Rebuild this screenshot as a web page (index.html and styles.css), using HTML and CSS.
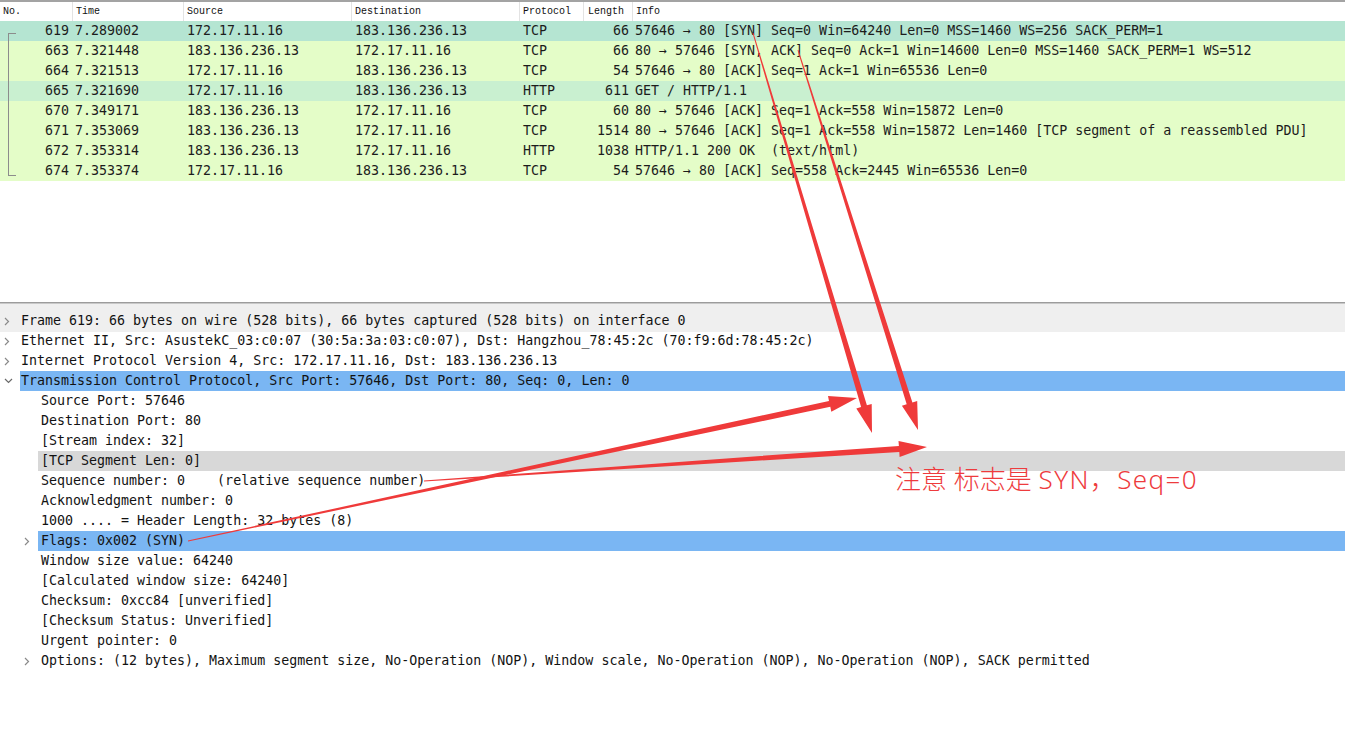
FILE: index.html
```html
<!DOCTYPE html>
<html>
<head>
<meta charset="utf-8">
<link rel="stylesheet" href="styles.css">
</head>
<body>
<div class="app">
  <div class="plist">
    <div class="phead">
      <div class="hc">No.</div>
      <div class="hc">Time</div>
      <div class="hc">Source</div>
      <div class="hc">Destination</div>
      <div class="hc">Protocol</div>
      <div class="hc">Length</div>
      <div class="hc">Info</div>
    </div>
    <div class="prow r-first">
      <div class="c no first">619</div><div class="c">7.289002</div><div class="c src">172.17.11.16</div><div class="c dst">183.136.236.13</div><div class="c pr">TCP</div><div class="c len">66</div><div class="c info">57646 → 80 [SYN] Seq=0 Win=64240 Len=0 MSS=1460 WS=256 SACK_PERM=1</div>
    </div>
    <div class="prow r-tcp">
      <div class="c no mid">663</div><div class="c">7.321448</div><div class="c src">183.136.236.13</div><div class="c dst">172.17.11.16</div><div class="c pr">TCP</div><div class="c len">66</div><div class="c info">80 → 57646 [SYN, ACK] Seq=0 Ack=1 Win=14600 Len=0 MSS=1460 SACK_PERM=1 WS=512</div>
    </div>
    <div class="prow r-tcp">
      <div class="c no mid">664</div><div class="c">7.321513</div><div class="c src">172.17.11.16</div><div class="c dst">183.136.236.13</div><div class="c pr">TCP</div><div class="c len">54</div><div class="c info">57646 → 80 [ACK] Seq=1 Ack=1 Win=65536 Len=0</div>
    </div>
    <div class="prow r-http">
      <div class="c no mid">665</div><div class="c">7.321690</div><div class="c src">172.17.11.16</div><div class="c dst">183.136.236.13</div><div class="c pr">HTTP</div><div class="c len">611</div><div class="c info">GET / HTTP/1.1</div>
    </div>
    <div class="prow r-tcp">
      <div class="c no mid">670</div><div class="c">7.349171</div><div class="c src">183.136.236.13</div><div class="c dst">172.17.11.16</div><div class="c pr">TCP</div><div class="c len">60</div><div class="c info">80 → 57646 [ACK] Seq=1 Ack=558 Win=15872 Len=0</div>
    </div>
    <div class="prow r-tcp">
      <div class="c no mid">671</div><div class="c">7.353069</div><div class="c src">183.136.236.13</div><div class="c dst">172.17.11.16</div><div class="c pr">TCP</div><div class="c len">1514</div><div class="c info">80 → 57646 [ACK] Seq=1 Ack=558 Win=15872 Len=1460 [TCP segment of a reassembled PDU]</div>
    </div>
    <div class="prow r-tcp">
      <div class="c no mid">672</div><div class="c">7.353314</div><div class="c src">183.136.236.13</div><div class="c dst">172.17.11.16</div><div class="c pr">HTTP</div><div class="c len">1038</div><div class="c info">HTTP/1.1 200 OK  (text/html)</div>
    </div>
    <div class="prow r-tcp">
      <div class="c no last">674</div><div class="c">7.353374</div><div class="c src">172.17.11.16</div><div class="c dst">183.136.236.13</div><div class="c pr">TCP</div><div class="c len">54</div><div class="c info">57646 → 80 [ACK] Seq=558 Ack=2445 Win=65536 Len=0</div>
    </div>
  </div>

  <div class="details">
    <div class="drow top hover"><span class="exp"><svg width="6" height="9" viewBox="0 0 6 9"><path d="M1 1 L4.5 4.5 L1 8" fill="none" stroke="#8a8a8a" stroke-width="1.2"/></svg></span><span class="lbl">Frame 619: 66 bytes on wire (528 bits), 66 bytes captured (528 bits) on interface 0</span></div>
    <div class="drow top"><span class="exp"><svg width="6" height="9" viewBox="0 0 6 9"><path d="M1 1 L4.5 4.5 L1 8" fill="none" stroke="#8a8a8a" stroke-width="1.2"/></svg></span><span class="lbl">Ethernet II, Src: AsustekC_03:c0:07 (30:5a:3a:03:c0:07), Dst: Hangzhou_78:45:2c (70:f9:6d:78:45:2c)</span></div>
    <div class="drow top"><span class="exp"><svg width="6" height="9" viewBox="0 0 6 9"><path d="M1 1 L4.5 4.5 L1 8" fill="none" stroke="#8a8a8a" stroke-width="1.2"/></svg></span><span class="lbl">Internet Protocol Version 4, Src: 172.17.11.16, Dst: 183.136.236.13</span></div>
    <div class="drow top"><span class="exp"><svg width="9" height="6" viewBox="0 0 9 6"><path d="M1 1 L4.5 4.5 L8 1" fill="none" stroke="#6a6a6a" stroke-width="1.2"/></svg></span><span class="lbl sel">Transmission Control Protocol, Src Port: 57646, Dst Port: 80, Seq: 0, Len: 0</span></div>
    <div class="drow sub"><span class="exp"></span><span class="lbl">Source Port: 57646</span></div>
    <div class="drow sub"><span class="exp"></span><span class="lbl">Destination Port: 80</span></div>
    <div class="drow sub"><span class="exp"></span><span class="lbl">[Stream index: 32]</span></div>
    <div class="drow sub"><span class="exp"></span><span class="lbl grey">[TCP Segment Len: 0]</span></div>
    <div class="drow sub"><span class="exp"></span><span class="lbl">Sequence number: 0    (relative sequence number)</span></div>
    <div class="drow sub"><span class="exp"></span><span class="lbl">Acknowledgment number: 0</span></div>
    <div class="drow sub"><span class="exp"></span><span class="lbl">1000 .... = Header Length: 32 bytes (8)</span></div>
    <div class="drow sub"><span class="exp"><svg width="6" height="9" viewBox="0 0 6 9"><path d="M1 1 L4.5 4.5 L1 8" fill="none" stroke="#8a8a8a" stroke-width="1.2"/></svg></span><span class="lbl sel">Flags: 0x002 (SYN)</span></div>
    <div class="drow sub"><span class="exp"></span><span class="lbl">Window size value: 64240</span></div>
    <div class="drow sub"><span class="exp"></span><span class="lbl">[Calculated window size: 64240]</span></div>
    <div class="drow sub"><span class="exp"></span><span class="lbl">Checksum: 0xcc84 [unverified]</span></div>
    <div class="drow sub"><span class="exp"></span><span class="lbl">[Checksum Status: Unverified]</span></div>
    <div class="drow sub"><span class="exp"></span><span class="lbl">Urgent pointer: 0</span></div>
    <div class="drow sub"><span class="exp"><svg width="6" height="9" viewBox="0 0 6 9"><path d="M1 1 L4.5 4.5 L1 8" fill="none" stroke="#8a8a8a" stroke-width="1.2"/></svg></span><span class="lbl">Options: (12 bytes), Maximum segment size, No-Operation (NOP), Window scale, No-Operation (NOP), No-Operation (NOP), SACK permitted</span></div>
  </div>

  <svg class="annot" width="1345" height="750" viewBox="0 0 1345 750">
    <g fill="#ef3a3a">
      <polygon points="752.5,33.1 861.1,407.0 856.3,408.5 872,433 871.7,403.9 866.9,405.3 753.5,32.9"/>
      <polygon points="797.5,50.2 906.7,404.2 901.9,405.7 918,430 917.2,400.9 912.4,402.4 798.5,49.9"/>
      <polygon points="188.1,541.5 830.3,406.8 831.3,411.7 857,398 828.0,396.0 829.0,400.9 187.9,540.5"/>
      <polygon points="424.0,481.5 899.3,451.9 899.6,456.9 927,447 898.5,440.9 898.9,445.9 424.0,480.5"/>
    </g>
  </svg>
  <div class="note">注意 标志是 <span class="latin">SYN，Seq=0</span></div>
</div>
</body>
</html>
```

FILE: styles.css
```css
html, body {
  margin: 0;
  padding: 0;
  background: #ffffff;
}

.app {
  position: relative;
  width: 1345px;
  height: 750px;
  overflow: hidden;
  font-family: "DejaVu Sans Mono", "Liberation Mono", monospace;
  font-size: 13.3px;
  color: #1c1c1c;
}

.plist {
  height: 300px;
  border-top: 2px solid #a3a3a3;
  border-bottom: 1px solid #9c9c9c;
  display: flex;
  flex-direction: column;
}

.phead,
.prow {
  display: grid;
  grid-template-columns: 72px 111px 168px 168px 64px 49px 1fr;
}

.phead {
  height: 19px;
  align-items: center;
  font-family: "Liberation Mono", "Noto Sans CJK SC", monospace;
  font-size: 10px;
  color: #111;
}

.hc {
  height: 19px;
  line-height: 19px;
  padding-left: 3px;
  border-left: 1px solid #e3e3e3;
  white-space: nowrap;
}

.hc:first-child {
  border-left: none;
}

.hc:nth-child(6) {
  padding-left: 4px;
}

.prow {
  height: 20px;
  line-height: 20px;
  white-space: pre;
}

.r-first { background: #b5e5d2; }
.r-tcp { background: #e4fdc8; }
.r-http { background: #c9f0d0; }

.c {
  padding-left: 3px;
}

.c.src,
.c.dst,
.c.pr {
  padding-left: 4px;
}

.c.no {
  position: relative;
  text-align: right;
  padding-right: 3px;
  padding-left: 0;
}

.c.len {
  text-align: right;
  padding-right: 3px;
  padding-left: 0;
}

.c.no::before {
  content: "";
  position: absolute;
  left: 8px;
  width: 0;
  border-left: 1px solid #8c8c8c;
}

.c.no.first::before {
  top: 12px;
  bottom: 0;
  width: 7px;
  border-top: 1px solid #8c8c8c;
}

.c.no.mid::before {
  top: 0;
  bottom: 0;
}

.c.no.last::before {
  top: 0;
  height: 14px;
  width: 7px;
  border-bottom: 1px solid #8c8c8c;
}

.details {
  border-top: 1px solid #c8c8c8;
  padding-top: 7px;
  background: linear-gradient(#efefef, #efefef) no-repeat 0 0 / 100% 28px;
}

.drow {
  display: flex;
  height: 20px;
  line-height: 20px;
  white-space: pre;
}

.drow .exp {
  flex: 0 0 20px;
  display: flex;
  align-items: center;
  padding-left: 4px;
  box-sizing: border-box;
}

.drow.sub {
  padding-left: 18px;
}

.drow.top .lbl {
  padding-left: 1px;
}

.drow.sub .lbl {
  padding-left: 3px;
}

.drow.sub .exp {
  padding-left: 6px;
}

.lbl {
  flex: 1;
  color: #121212;
}

.lbl.sel {
  background: #7ab6f3;
}

.lbl.grey {
  background: #d8d8d8;
}

.drow.hover {
  background: #efefef;
}

.annot {
  position: absolute;
  left: 0;
  top: 0;
  pointer-events: none;
}

.note {
  position: absolute;
  left: 895px;
  top: 462px;
  font-family: "Noto Sans", "Noto Sans CJK SC", sans-serif;
  font-weight: 300;
  font-size: 26px;
  line-height: 34px;
  color: #ee3b3d;
  white-space: nowrap;
}

.note .latin {
  letter-spacing: 1.4px;
}
```
